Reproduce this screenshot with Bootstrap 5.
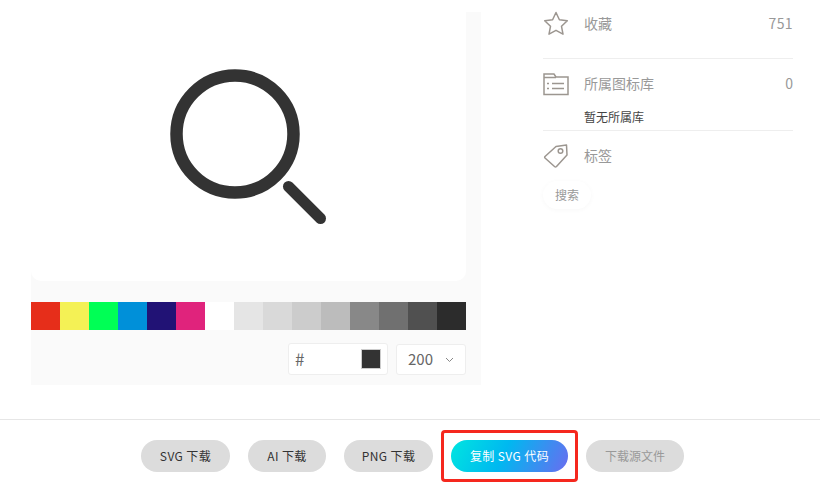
<!DOCTYPE html>
<html lang="zh-CN">
  <head>
    <meta charset="UTF-8" />
    <meta name="viewport" content="width=device-width, initial-scale=1.0" />
    <title>图标详情</title>
    <link href="https://cdn.jsdelivr.net/npm/bootstrap@5.3.2/dist/css/bootstrap.min.css" rel="stylesheet" />
    <style>
      body {
        background: #fff;
        font-family: "Noto Sans CJK SC", "Liberation Sans", sans-serif;
        height: 484px;
        overflow: hidden;
      }
      .detail-wrap {
        padding: 12px 27px 0 31px;
        height: 385px;
      }
      .icon-panel {
        width: 450px;
        height: 373px;
        background: #fafafa;
      }
      .preview-box {
        width: 435px;
        height: 269px;
        background: #fff;
        border-radius: 0 0 10px 10px;
      }
      .preview-box svg {
        margin-left: 134px;
        margin-top: 52px;
      }
      .swatches {
        width: 435px;
        height: 28px;
        margin-top: 21px;
      }
      .swatches span {
        width: 29px;
      }
      .panel-tools {
        width: 435px;
        margin-top: 13px;
      }
      .hex-box {
        width: 100px;
        height: 32px;
        background: #fff;
        border: 1px solid #eee;
        border-radius: 3px;
        padding: 0 6px;
        color: #666;
        font-size: 17px;
      }
      .hex-color {
        width: 20px;
        height: 20px;
        background: #333;
        border: 1px solid #ccc;
      }
      .size-box {
        width: 70px;
        height: 31px;
        margin-top: 1px;
        background: #fff;
        border: 1px solid #eee;
        border-radius: 3px;
        padding: 0 11px;
        color: #666;
        font-size: 15px;
      }
      .side-info {
        width: 250px;
        color: #999;
        font-size: 14px;
      }
      .info-row {
        height: 24px;
      }
      .info-row span {
        margin-top: -2px;
      }
      .info-row svg {
        flex: none;
        margin-right: 15px;
      }
      .info-num {
        letter-spacing: 0.4px;
      }
      .info-line {
        border-top: 1px solid #eee;
      }
      .no-lib {
        color: #444;
        font-size: 12px;
        line-height: 18px;
        padding-left: 41px;
      }
      .tag-pill {
        width: 48px;
        height: 28px;
        line-height: 27px;
        font-size: 12px;
        text-align: center;
        border-radius: 14px;
        background: #fff;
        box-shadow: 0 1px 5px rgba(0, 0, 0, 0.03);
      }
      .action-bar {
        margin-top: 34px;
        border-top: 1px solid #e6e6e6;
        padding: 20px 0 0 5px;
        gap: 18px;
      }
      .act-btn {
        height: 32px;
        line-height: 32px;
        padding: 0;
        border: 0;
        border-radius: 16px;
        background: #dcdcdc;
        color: #333;
        font-size: 12px;
        letter-spacing: 0.4px;
        text-align: center;
      }
      .act-copy {
        width: 117px;
        color: #fff;
        background: linear-gradient(115deg, #00e5e0 0%, #00b8f0 45%, #6a6cf0 100%);
      }
      .act-off {
        color: #999;
        letter-spacing: 0;
      }
      .copy-mark {
        margin: -10px;
        padding: 7px;
        border: 3px solid #f5281e;
        border-radius: 4px;
      }
    </style>
  </head>
  <body>
    <div class="detail-wrap d-flex justify-content-between">
      <div class="icon-panel">
        <div class="preview-box">
          <svg width="165" height="165" viewBox="0 0 165 165">
            <circle cx="70" cy="70" r="58.5" fill="none" stroke="#333" stroke-width="12.5" />
            <line x1="123.500" y1="122.500" x2="155.500" y2="154.500" stroke="#333" stroke-width="11" stroke-linecap="round" />
          </svg>
        </div>
        <div class="swatches d-flex">
          <span style="background: #e62e1a"></span>
          <span style="background: #f4f155"></span>
          <span style="background: #00ff55"></span>
          <span style="background: #0090d9"></span>
          <span style="background: #211275"></span>
          <span style="background: #e0237c"></span>
          <span style="background: #ffffff"></span>
          <span style="background: #e5e5e5"></span>
          <span style="background: #d9d9d9"></span>
          <span style="background: #cccccc"></span>
          <span style="background: #bcbcbc"></span>
          <span style="background: #888888"></span>
          <span style="background: #707070"></span>
          <span style="background: #505050"></span>
          <span style="background: #2c2c2c"></span>
        </div>
        <div class="panel-tools d-flex justify-content-end gap-2">
          <div class="hex-box d-flex align-items-center justify-content-between">
            <span>#</span>
            <span class="hex-color"></span>
          </div>
          <div class="size-box d-flex align-items-center justify-content-between">
            <span>200</span>
            <svg width="9" height="6" viewBox="0 0 9 6"><path d="M1 1l3.500 3.500L8 1" fill="none" stroke="#888" stroke-width="1" /></svg>
          </div>
        </div>
      </div>

      <div class="side-info">
        <div class="info-row d-flex align-items-center">
          <svg width="26" height="26" viewBox="0 0 26 26"><path d="M13 1.500l3.400 7.300 7.900 1-5.800 5.500 1.500 7.900-7-3.900-7 3.900 1.500-7.900L1.700 9.800l7.900-1z" fill="none" stroke="#9c9690" stroke-width="1.500" stroke-linejoin="round" /></svg>
          <span class="flex-grow-1">收藏</span>
          <span class="info-num">751</span>
        </div>
        <div class="info-line" style="margin-top: 22px"></div>
        <div class="info-row d-flex align-items-center" style="margin-top: 13px">
          <svg width="26" height="24" viewBox="0 0 26 24"><path d="M1 22.500V2h10l2 3h12v17.500zM1 5.500h12M9 11.500h12M9 16.500h12M4 11.500h2M4 16.500h2" fill="none" stroke="#9c9690" stroke-width="1.500" /></svg>
          <span class="flex-grow-1">所属图标库</span>
          <span>0</span>
        </div>
        <div class="no-lib" style="margin-top: 12px">暂无所属库</div>
        <div class="info-line" style="margin-top: 4px"></div>
        <div class="info-row d-flex align-items-center" style="margin-top: 13px">
          <svg width="26" height="26" viewBox="0 0 26 26"><path d="M2 13.500L13 3.500l10.500-1.500.5 10L13.500 23.500a1.500 1.500 0 0 1-2 0L2 15a1 1 0 0 1 0-1.500z" fill="none" stroke="#9c9690" stroke-width="1.500" stroke-linejoin="round" /><circle cx="17.500" cy="8" r="2.300" fill="none" stroke="#9c9690" stroke-width="1.500" /></svg>
          <span>标签</span>
        </div>
        <div class="tag-pill" style="margin-top: 13px">搜索</div>
      </div>
    </div>

    <div class="action-bar d-flex justify-content-center">
      <button class="act-btn" style="width: 89px">SVG 下载</button>
      <button class="act-btn" style="width: 78px">AI 下载</button>
      <button class="act-btn" style="width: 89px">PNG 下载</button>
      <div class="copy-mark"><button class="act-btn act-copy d-block">复制 SVG 代码</button></div>
      <button class="act-btn act-off" style="width: 98px">下载源文件</button>
    </div>

    <script src="https://cdn.jsdelivr.net/npm/bootstrap@5.3.2/dist/js/bootstrap.bundle.min.js"></script>
  </body>
</html>
